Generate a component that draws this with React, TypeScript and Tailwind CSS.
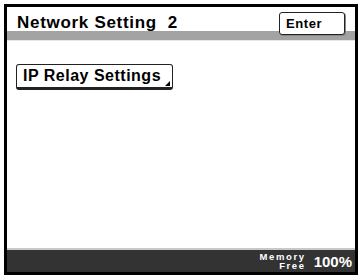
export default function App() {
  return (
    <div className="w-[362px] h-[279px] bg-white p-[4px]" style={{ fontFamily: '"Liberation Sans", Arial, sans-serif' }}>
      <div className="w-full h-full border-[3px] border-black flex flex-col bg-white">
        {/* header */}
        <div className="flex items-start justify-between h-[24px] pl-[10px] pr-[10px] shrink-0">
          <h1 className="text-[17px] font-bold leading-none mt-[7px] text-black whitespace-pre tracking-[0.7px]">Network Setting  2</h1>
          <button className="relative z-10 mt-[5px] w-[66px] h-[23px] rounded-[3px] border-[1.5px] border-[#222] bg-white text-left pl-[6px] text-[13px] font-bold text-black leading-none tracking-[0.6px] shadow-[1px_1px_0_#888]">
            Enter
          </button>
        </div>
        <div className="h-[9px] bg-[#a3a3a3] shrink-0" />
        <div className="h-[1px] bg-[#e6e6e6] shrink-0" />

        {/* content */}
        <div className="flex-1 pt-[23px] pl-[9px]">
          <button className="relative w-[157px] h-[26px] rounded-[3px] border-[1.5px] border-[#222] border-b-[3px] bg-white text-left pl-[6px] text-[16px] font-bold text-black leading-none tracking-[0.5px]">
            IP Relay Settings
            <span className="absolute right-[2px] bottom-[1px] w-0 h-0 border-l-[5px] border-l-transparent border-b-[5px] border-b-black" />
          </button>
        </div>

        {/* footer */}
        <div className="h-[2px] bg-[#c8c8c8] shrink-0" />
        <div className="h-[22px] bg-[#333333] flex items-center justify-end gap-[9px] pr-[3px] shrink-0">
          <div className="flex flex-col items-end text-white font-bold text-[9.5px] leading-[9.5px] tracking-[1.6px] mr-[-1px]">
            <span>Memory</span>
            <span>Free</span>
          </div>
          <span className="text-white font-bold text-[15px] leading-none">100%</span>
        </div>
      </div>
    </div>
  );
}
